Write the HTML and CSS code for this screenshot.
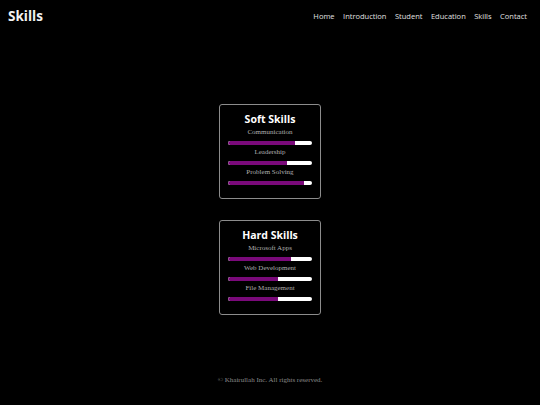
FILE: index.html
```html
<!DOCTYPE html>
<html lang="en">
<head>
<meta charset="utf-8">
<title>Skills</title>
<link rel="stylesheet" href="styles.css">
</head>
<body>
<header class="site-header">
  <h1 class="brand">Skills</h1>
  <nav class="nav">
    <a href="#">Home</a>
    <a href="#">Introduction</a>
    <a href="#">Student</a>
    <a href="#">Education</a>
    <a href="#">Skills</a>
    <a href="#">Contact</a>
  </nav>
</header>
<main class="main">
  <section class="card">
    <h2 class="card-title">Soft Skills</h2>
    <div class="skill">
      <div class="skill-label">Communication</div>
      <div class="bar"><div class="fill" style="width:80%"></div></div>
    </div>
    <div class="skill">
      <div class="skill-label">Leadership</div>
      <div class="bar"><div class="fill" style="width:70%"></div></div>
    </div>
    <div class="skill">
      <div class="skill-label">Problem Solving</div>
      <div class="bar"><div class="fill" style="width:90%"></div></div>
    </div>
  </section>
  <section class="card">
    <h2 class="card-title">Hard Skills</h2>
    <div class="skill">
      <div class="skill-label">Microsoft Apps</div>
      <div class="bar"><div class="fill" style="width:75%"></div></div>
    </div>
    <div class="skill">
      <div class="skill-label">Web Development</div>
      <div class="bar"><div class="fill" style="width:60%"></div></div>
    </div>
    <div class="skill">
      <div class="skill-label">File Management</div>
      <div class="bar"><div class="fill" style="width:60%"></div></div>
    </div>
  </section>
</main>
<footer class="footer">© Khairullah Inc. All rights reserved.</footer>
</body>
</html>
```

FILE: styles.css
```css
html, body {
  margin: 0;
  padding: 0;
  background: #000;
}
body {
  width: 540px;
  min-height: 405px;
  font-family: "Liberation Serif", serif;
  color: #fff;
}
.site-header {
  height: 32px;
  display: flex;
  align-items: center;
  justify-content: space-between;
  padding: 0 13px 0 8px;
}
.brand {
  margin: 0;
  font-family: "Open Sans", "DejaVu Sans", sans-serif;
  font-weight: 700;
  font-size: 13.5px;
  line-height: 16px;
  color: #f2f2f2;
}
.nav {
  display: flex;
  gap: 8.5px;
}
.nav a {
  font-family: "Open Sans", "DejaVu Sans", sans-serif;
  font-size: 7.5px;
  color: #e0e0e0;
  text-decoration: none;
  line-height: 10px;
}
.main {
  display: flex;
  flex-direction: column;
  align-items: center;
  gap: 21px;
  padding-top: 72px;
}
.card {
  width: 84px;
  padding: 8px 8px 10px;
  border: 1px solid #8c8c8c;
  border-radius: 3px;
  text-align: center;
}
.card-title {
  margin: 0 0 3px;
  font-family: "Open Sans", "DejaVu Sans", sans-serif;
  font-weight: 700;
  font-size: 10.5px;
  line-height: 12px;
  color: #fff;
}
.skill-label {
  font-size: 7px;
  line-height: 9px;
  color: #b0b0b0;
}
.bar {
  height: 4px;
  margin: 4px 0 3px;
  background: #fff;
  border-radius: 2px;
  overflow: hidden;
}
.fill {
  height: 100%;
  background: #7a0a7a;
  border-radius: 2px 0 0 2px;
}
.footer {
  margin-top: 60px;
  text-align: center;
  font-size: 7px;
  line-height: 10px;
  color: #8a8a8a;
}
```
